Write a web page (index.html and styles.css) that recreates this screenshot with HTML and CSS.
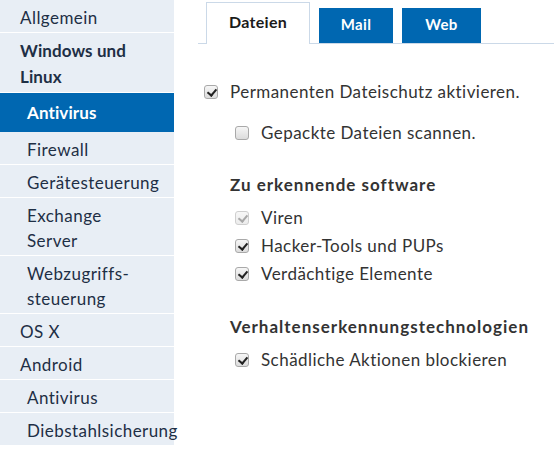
FILE: index.html
```html
<!DOCTYPE html>
<html lang="de">
<head>
<meta charset="utf-8">
<title>Antivirus</title>
<link rel="stylesheet" href="styles.css">
</head>
<body>
<div class="page">
  <nav class="sidebar">
    <ul class="menu">
      <li class="item">Allgemein</li>
      <li class="item group">Windows und<br>Linux</li>
      <li class="item sub active">Antivirus</li>
      <li class="item sub">Firewall</li>
      <li class="item sub">Gerätesteuerung</li>
      <li class="item sub">Exchange<br>Server</li>
      <li class="item sub">Webzugriffs-<br>steuerung</li>
      <li class="item">OS X</li>
      <li class="item">Android</li>
      <li class="item sub">Antivirus</li>
      <li class="item sub">Diebstahlsicherung</li>
    </ul>
  </nav>
  <main class="main">
    <div class="tabs">
      <div class="tab current">Dateien</div>
      <div class="tab">Mail</div>
      <div class="tab">Web</div>
    </div>
    <div class="panel">
      <label class="opt top"><span class="cb checked"></span>Permanenten Dateischutz aktivieren.</label>
      <label class="opt nested second"><span class="cb"></span>Gepackte Dateien scannen.</label>
      <h3 class="heading first">Zu erkennende software</h3>
      <label class="opt nested"><span class="cb checked disabled"></span>Viren</label>
      <label class="opt nested"><span class="cb checked"></span>Hacker-Tools und PUPs</label>
      <label class="opt nested"><span class="cb checked"></span>Verdächtige Elemente</label>
      <h3 class="heading second-h">Verhaltenserkennungstechnologien</h3>
      <label class="opt nested"><span class="cb checked"></span>Schädliche Aktionen blockieren</label>
    </div>
  </main>
</div>
</body>
</html>
```

FILE: styles.css
```css
* { box-sizing: border-box; }
html, body { margin: 0; padding: 0; background: #fff; }
body {
  font-family: Lato, "Open Sans", "Liberation Sans", sans-serif;
  font-size: 17px;
  color: #333;
}
.page {
  display: flex;
  align-items: flex-start;
  width: 554px;
  height: 472px;
  overflow: hidden;
}
.sidebar {
  width: 174px;
  flex: none;
  background: #e8eef5;
}
.menu {
  list-style: none;
  margin: 0;
  padding: 0;
}
.item {
  padding: 5px 0 2px 20px;
  line-height: 25px;
  color: #1e2f45;
  border-bottom: 1px solid #fff;
  white-space: nowrap;
  letter-spacing: 0.45px;
}
.item.group { font-weight: 700; line-height: 26px; letter-spacing: 0.1px; }
.item.sub { padding-left: 27px; }
.item.active {
  background: #0067b1;
  color: #fff;
  font-weight: 700;
  padding-top: 7px;
  padding-bottom: 7px;
  border-bottom: none;
  letter-spacing: 0.1px;
}
.main {
  flex: 1;
  margin-left: 24px;
}
.tabs {
  display: flex;
  align-items: flex-end;
  gap: 9px;
  height: 44px;
  padding: 0 0 0 8px;
  border-bottom: 1px solid #cbd9e8;
}
.tab {
  height: 35px;
  line-height: 33px;
  background: #0067b1;
  color: #fff;
  font-weight: 700;
  text-align: center;
  font-size: 15px;
  letter-spacing: 0.3px;
}
.tab:nth-child(2) { width: 74px; }
.tab:nth-child(3) { width: 79px; }
.tab.current {
  width: 104px;
  height: 42px;
  line-height: 38px;
  font-size: 16px;
  background: #fff;
  color: #1b1b1b;
  border: 1px solid #cbd9e8;
  border-bottom: none;
  margin-bottom: -1px;
}
.panel {
  padding-left: 6px;
}
.opt {
  display: flex;
  align-items: center;
  line-height: 28px;
  height: 28px;
  letter-spacing: 0.45px;
  color: #333;
}
.opt.top { margin-top: 34px; }
.opt.nested { padding-left: 31px; }
.opt.second { margin-top: 13px; }
.cb {
  width: 14px;
  height: 14px;
  flex: none;
  margin-right: 12px;
  border: 1px solid #a9a9a9;
  border-radius: 3px;
  background: linear-gradient(#f6f6f6, #dcdcdc);
  position: relative;
}
.cb.checked::after {
  content: "";
  position: absolute;
  left: 4px;
  top: 1px;
  width: 4px;
  height: 7px;
  border: solid #222;
  border-width: 0 2px 2px 0;
  transform: rotate(40deg);
}
.cb.disabled { border-color: #cfcfcf; background: linear-gradient(#f7f7f7, #ececec); }
.cb.disabled::after { border-color: #a8a8a8; }
.heading {
  margin: 0;
  padding-left: 26px;
  line-height: 28px;
  font-size: 17px;
  font-weight: 700;
  color: #333;
  letter-spacing: 1px;
}
.heading.first { margin-top: 24px; margin-bottom: 5px; }
.heading.second-h { margin-top: 25px; margin-bottom: 5px; }
```
